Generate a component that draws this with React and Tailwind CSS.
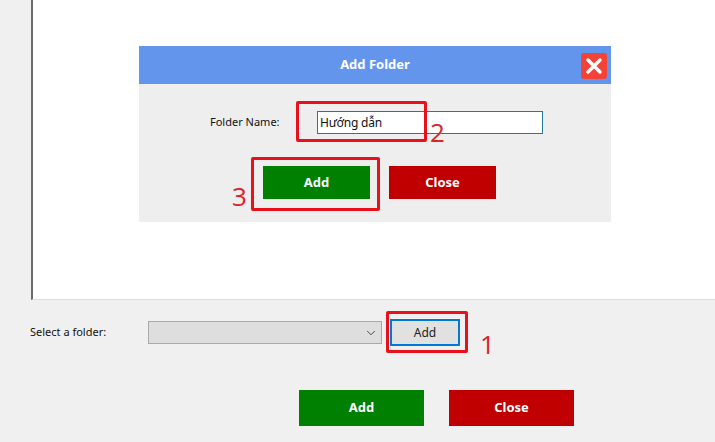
import React from 'react';
import { ChevronDown } from 'lucide-react';

const font = { tahoma: 'font-["Noto_Sans",sans-serif]' };

const Mark = ({ className }) => (
  <div className={`absolute border-[3px] border-[#e8101a] rounded-[2px] ${className}`} />
);

const Num = ({ children, className }) => (
  <span className={`absolute font-["Open_Sans",sans-serif] text-[26px] leading-[30px] text-[#e0222a] ${className}`}>
    {children}
  </span>
);

const Dialog = () => {
  return (
    <div className="w-[472px] h-[176px] ml-[106px] bg-[#eeeeee] flex flex-col">
      <div className="h-[38px] bg-[#6495ed] flex items-center justify-center relative">
        <span className="text-[13px] font-bold text-white">Add Folder</span>
        <button className="absolute right-[4px] top-[7px] w-[26px] h-[26px] rounded-[3px] bg-[#f44336] flex items-center justify-center">
          <svg width="18" height="18" viewBox="0 0 18 18">
            <path d="M3 3L15 15M15 3L3 15" stroke="white" strokeWidth="3.5" strokeLinecap="round" />
          </svg>
        </button>
      </div>
      <div className="flex items-center mt-[27px] h-[23px]">
        <span className="ml-[71px] w-[107px] text-[11px] text-[#111]">Folder Name:</span>
        <div className="w-[226px] h-[23px] bg-white border border-[#1f7a9c] pl-[2px] flex items-center text-[12px] tracking-[-0.2px] text-[#111]">
          Hướng dẫn
        </div>
      </div>
      <div className="flex gap-[19px] ml-[124px] mt-[32px]">
        <button className="w-[107px] h-[33px] bg-[#008000] text-white text-[13px] font-bold">Add</button>
        <button className="w-[107px] h-[33px] bg-[#c00000] text-white text-[13px] font-bold">Close</button>
      </div>
    </div>
  );
};

export default function App() {
  return (
    <div className={`relative w-[715px] h-[442px] overflow-hidden bg-[#f0f0f0] ${font.tahoma}`}>
      {/* Top panel */}
      <div className="h-[300px] ml-[31px] bg-white border-l-2 border-l-[#6b6b6b] border-b border-b-[#dddddd] pt-[46px]">
        <Dialog />
      </div>

      {/* Folder row */}
      <div className="flex items-center h-[27px] mt-[19px]">
        <span className="ml-[30px] w-[118px] text-[11px] text-[#111]">Select a folder:</span>
        <div className="w-[234px] h-[23px] bg-[#dedede] border border-[#a9a9a9] flex items-center justify-end pr-[3px]">
          <ChevronDown size={14} strokeWidth={1.5} className="text-[#333]" />
        </div>
        <button className="ml-[8px] w-[70px] h-[27px] bg-[#e1e1e1] border-2 border-[#0078d7] text-[12px] text-[#222]">Add</button>
      </div>

      {/* Bottom buttons */}
      <div className="flex gap-[25px] ml-[299px] mt-[44px]">
        <button className="w-[125px] h-[36px] bg-[#008000] text-white text-[13px] font-bold">Add</button>
        <button className="w-[125px] h-[36px] bg-[#c00000] text-white text-[13px] font-bold">Close</button>
      </div>

      {/* Red annotations */}
      <Mark className="left-[296px] top-[101px] w-[131px] h-[41px]" />
      <Mark className="left-[251px] top-[157px] w-[129px] h-[54px]" />
      <Mark className="left-[386px] top-[311px] w-[82px] h-[42px]" />
      <Num className="left-[430px] top-[117px]">2</Num>
      <Num className="left-[232px] top-[181px]">3</Num>
      <Num className="left-[480px] top-[329px]">1</Num>
    </div>
  );
}
